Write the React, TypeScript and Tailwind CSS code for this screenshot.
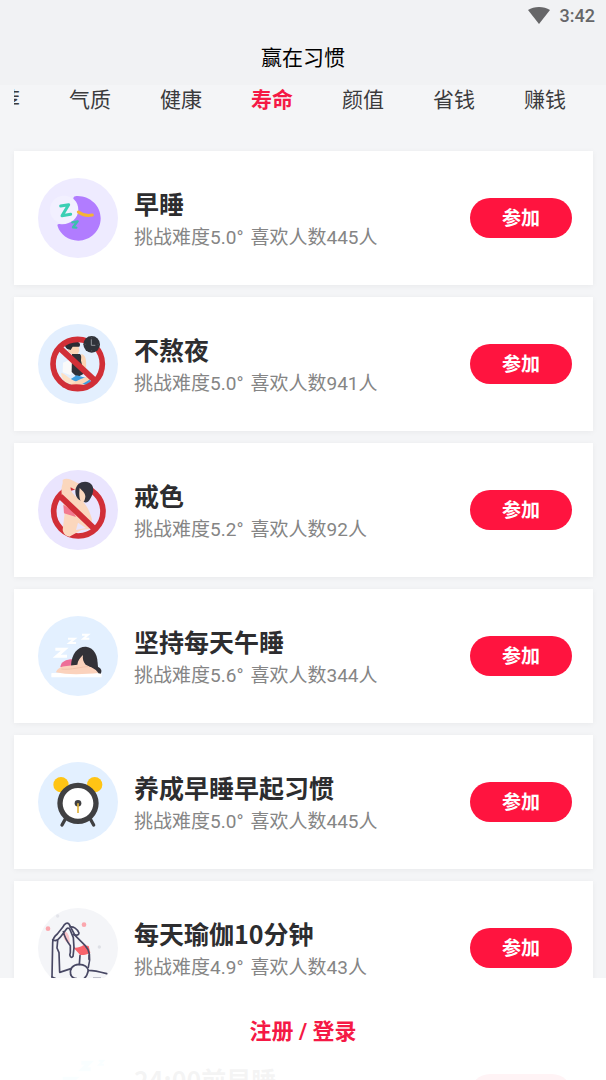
import type { ReactNode } from "react";

const tabs = ["推荐", "气质", "健康", "寿命", "颜值", "省钱", "赚钱"];

function MoonIcon() {
  return (
    <svg viewBox="30 27 240 240" className="size-20 shrink-0" aria-hidden="true">
      <circle cx="150" cy="147" r="120" fill="#eeebff" />
      <circle cx="108" cy="122" r="42" fill="#f2f0ff" />
      <path d="M136 88c1-6 6-8 13-7 38 1 69 29 69 67 0 37-30 67-67 67-30 0-55-19-62-43-2-6 1-8 6-7 31 4 55-15 56-42 0-13-4-24-12-31-2-2-3-2-3-4Z" fill="#b17cff" />
      <path d="M151 129c13 10 26 12 42 9" fill="none" stroke="#f5b335" strokeWidth="9" strokeLinecap="round" />
      <path d="M98 111l24-4-20 33 26-4" fill="none" stroke="#3bcfb4" strokeWidth="9" strokeLinecap="round" strokeLinejoin="round" />
      <path d="M133 160l16-3-14 18 10 1" fill="none" stroke="#3bbfae" strokeWidth="7" strokeLinecap="round" strokeLinejoin="round" />
    </svg>
  );
}

function NoLateNightIcon() {
  return (
    <svg viewBox="32 28 240 240" className="size-20 shrink-0" aria-hidden="true">
      <circle cx="152" cy="148" r="120" fill="#e3effe" />
      <path d="M107 144l20-9 23 28-22 18-22-8Z" fill="#fafafa" />
      <path d="M122 90l30-2 4 20-6 14-14-1-14-12Z" fill="#fbd5b5" />
      <path d="M112 88c0-9 14-14 30-9 13 1 20 9 14 17l-20 0-6 10-10-3c-5-4-8-9-8-15Z" fill="#2b2c33" />
      <path d="M134 118l24 0 9 14 1 46-18 10-17-16Z" fill="#2f3138" />
      <path d="M162 118c12 2 16 16 14 42l-10-2-5-20Z" fill="#fbd5b5" />
      <path d="M120 200l28-18 36 10 12 14-30 10-46 2Z" fill="#3f9ee0" />
      <path d="M102 174c8 2 24 18 42 26l34 12-28 6-30-12c-12-8-19-20-18-32Z" fill="#fde0c4" />
      <path d="M192 184c-20 2-44 14-60 24l10 8c18-4 40-16 50-26Z" fill="#fbd5b5" />
      <path d="M104 217c24-12 66-10 88 0l-40 12Z" fill="#d12f37" />
      <circle cx="151" cy="148" r="74" fill="none" stroke="#d12f37" strokeWidth="17" />
      <path d="M97 100l106 98" stroke="#d12f37" strokeWidth="18" />
      <circle cx="193" cy="89" r="25" fill="#30333a" />
      <path d="M192 74v18h12" fill="none" stroke="#8f9298" strokeWidth="3" />
      <path d="M193 68v3M193 107v3M172 89h3M211 89h3" stroke="#6b6e74" strokeWidth="2" />
    </svg>
  );
}

function NoLustIcon() {
  return (
    <svg viewBox="30 30 240 240" className="size-20 shrink-0" aria-hidden="true">
      <circle cx="150" cy="150" r="120" fill="#eae5fe" />
      <circle cx="151" cy="154" r="74" fill="none" stroke="#d12f37" strokeWidth="17" />
      <path d="M104 60c10-8 26-2 46 10l6 14-8 10-20-12c-2 8 6 20 18 30 20 8 36 30 46 66l-6 28-26 4-36 20c-12-2-18-10-20-20l6-50-4-36c-6-20-8-38-2-54Z" fill="#fbd7bd" />
      <path d="M106 134l28 18 10 19-36-11Z" fill="#f2798f" />
      <path d="M150 188l-6 22 30-6Z" fill="#e9e5fb" />
      <path d="M97 109l104 99" stroke="#d12f37" strokeWidth="18" />
      <path d="M142 92c2-22 24-32 42-24 16 8 14 30 4 46-6 12-14 16-20 12l-8-4c-12-4-18-14-18-30Z" fill="#34343e" />
      <path d="M155 84c8 8 16 14 17 24 0 8-3 18-9 20-8-4-11-20-8-44Z" fill="#fbd7bd" />
    </svg>
  );
}

function NapIcon() {
  return (
    <svg viewBox="30 31 240 240" className="size-20 shrink-0" aria-hidden="true">
      <circle cx="150" cy="151" r="120" fill="#e3f0ff" />
      <g fill="none" stroke="#fff">
        <path d="M82 131h28l-24 21h31" strokeWidth="9" />
        <path d="M120 99h20l-16 13h20" strokeWidth="6" />
        <path d="M162 87h18l-14 12h18" strokeWidth="6" />
      </g>
      <rect x="70" y="202" width="151" height="13" rx="2" fill="#fff" />
      <path d="M97 184c2-16 18-24 42-23l13 25Z" fill="#ed6f98" />
      <path d="M129 180c2-36 20-58 45-57 25 3 38 28 34 60 12 4 15 12 10 21-20-6-66-4-89-24Z" fill="#333238" />
      <path d="M165 148c-8 7-16 17-17 29l-38 5c-15 2-23 9-26 18 30 8 90 6 127 2-8-14-25-19-38-25-7-8-10-17-8-29Z" fill="#fbd2bc" />
      <path d="M100 190c28 4 64-8 82-7" fill="none" stroke="#edb9a1" strokeWidth="2" />
      <path d="M166 147c2 17 8 30 21 36l24 5-5-26-20-24Z" fill="#333238" />
    </svg>
  );
}

function AlarmIcon() {
  return (
    <svg viewBox="32 33 240 240" className="size-20 shrink-0" aria-hidden="true">
      <circle cx="152" cy="153" r="120" fill="#e3f0ff" />
      <circle cx="101" cy="101" r="23" fill="#ffc414" />
      <circle cx="202" cy="101" r="23" fill="#ffc414" />
      <path d="M114 204l-10 18M189 204l10 18" stroke="#404042" strokeWidth="10" strokeLinecap="round" />
      <circle cx="152" cy="157" r="54" fill="#fff" stroke="#404042" strokeWidth="16" />
      <circle cx="152" cy="157" r="10" fill="#404042" />
      <path d="M152 157v29" stroke="#e3b43b" strokeWidth="5" />
    </svg>
  );
}

function YogaIcon() {
  return (
    <svg viewBox="32 37 240 240" className="size-20 shrink-0" aria-hidden="true">
      <circle cx="152" cy="157" r="120" fill="#f4f5f8" />
      <circle cx="62" cy="99" r="7" fill="#fba7ae" />
      <circle cx="170" cy="87" r="7" fill="#fba7ae" />
      <circle cx="91" cy="61" r="5" fill="#e3e4ea" />
      <circle cx="216" cy="154" r="5" fill="#dee0e6" />
      <path d="M108 108c12-2 20 12 19 36-15-6-21-18-19-36Z" fill="#fbc5c9" />
      <path d="M137 155c10 3 20 0 32-7l15 3 5 20c-10 6-20 8-31 7-6-8-13-14-21-23Z" fill="#f8646c" />
      <g fill="none" stroke="#484864" strokeWidth="5" strokeLinecap="round" strokeLinejoin="round">
        <path d="M74 244l2-103c0-10 6-20 14-26l16-20c6-12 13-16 19-10l18 34 30 30c16 16 18 36 10 66" />
        <path d="M76 132c8 6 17 0 24-9l18-24c4-3 8-1 10 3l10 24 2 30-3 26c-6 8-12-2-8-12v-20c-8-10-16-20-21-42" />
        <path d="M128 94c10-2 22 5 27 18 0 8-10 7-17 5" />
        <path d="M91 135l-2 22 6 14 2 59 34-11" />
        <path d="M158 180l-2 26M185 178v13" />
        <path d="M130 237c-4-18 6-30 25-31 16 1 26 8 28 18 18 0 37 5 55 10" />
        <path d="M130 237c3 7 9 12 18 12M74 244l12 5M183 224c-2 11-6 19-13 25" />
      </g>
      <path d="M76 250h112M197 247h24" stroke="#8b8b9f" strokeWidth="3" />
    </svg>
  );
}

function ZzzIcon() {
  return (
    <svg viewBox="30 30 240 240" className="size-20 shrink-0" aria-hidden="true">
      <circle cx="150" cy="150" r="120" fill="#fafcff" />
      <g fill="none" stroke="#8fdcf5">
        <path d="M104 104h36l-32 30h36" strokeWidth="12" />
        <path d="M160 56h24l-20 20h24" strokeWidth="12" />
        <path d="M212 50h14l-12 12h14" strokeWidth="6" />
      </g>
    </svg>
  );
}

type Habit = {
  name: string;
  level: string;
  likes: number;
  icon: ReactNode;
};

const habits: Habit[] = [
  { name: "早睡", level: "5.0", likes: 445, icon: <MoonIcon /> },
  { name: "不熬夜", level: "5.0", likes: 941, icon: <NoLateNightIcon /> },
  { name: "戒色", level: "5.2", likes: 92, icon: <NoLustIcon /> },
  { name: "坚持每天午睡", level: "5.6", likes: 344, icon: <NapIcon /> },
  { name: "养成早睡早起习惯", level: "5.0", likes: 445, icon: <AlarmIcon /> },
  { name: "每天瑜伽10分钟", level: "4.9", likes: 43, icon: <YogaIcon /> },
  { name: "24:00前早睡", level: "5.0", likes: 120, icon: <ZzzIcon /> },
];

function HabitCard({ habit }: { habit: Habit }) {
  return (
    <li className="flex h-[134px] shrink-0 items-center gap-4 bg-white pl-6 pr-[21px] shadow-[0_1px_6px_rgba(0,0,0,0.05)]">
      {habit.icon}
      <div className="min-w-0 flex-1">
        <h2 className="font-['Noto_Sans_CJK_SC',sans-serif] text-[25px] leading-[39px] font-bold whitespace-nowrap text-[#2d2d2f]">
          {habit.name}
        </h2>
        <p className="flex gap-[7px] text-[19px] leading-[29px] whitespace-nowrap text-[#858585]">
          <span>挑战难度{habit.level}°</span>
          <span>喜欢人数{habit.likes}人</span>
        </p>
      </div>
      <button type="button" className="h-10 w-[102px] shrink-0 rounded-full bg-[#ff143f] pt-0.5 text-[19px] font-bold text-white">
        参加
      </button>
    </li>
  );
}

export default function App() {
  return (
    <div className="relative flex h-screen flex-col overflow-hidden bg-[#f4f5f7] font-[Roboto,'Noto_Sans_CJK_SC',sans-serif]">
      <header className="bg-[#f1f2f4]">
        {/* Status bar */}
        <div className="flex h-8 items-center justify-end gap-[10px] pr-[11px] text-[#666668]">
          <svg viewBox="0 0 22 18" className="h-[18px] w-[22px]" aria-hidden="true">
            <path d="M0 3C6-1 16-1 22 3L11 17Z" fill="currentColor" />
          </svg>
          <span className="text-lg font-medium">3:42</span>
        </div>
        <h1 className="h-[53px] text-center text-[21px] leading-[52px] text-black">赢在习惯</h1>
      </header>

      <nav className="mx-[14px] shrink-0 overflow-hidden">
        <ul className="flex justify-end gap-[49px] pr-[26px]">
          {tabs.map((tab) => (
            <li key={tab} className="shrink-0">
              <button
                type="button"
                className={
                  tab === "寿命"
                    ? "block text-[21px] leading-[30px] font-bold text-[#f51945]"
                    : "block text-[21px] leading-[30px] text-[#3b3b3d]"
                }
              >
                {tab}
              </button>
            </li>
          ))}
        </ul>
      </nav>

      <main className="min-h-0 flex-1 overflow-y-auto pt-9 [scrollbar-width:none]">
        <ul className="flex flex-col gap-3 pr-[13px] pb-28 pl-[14px]">
          {habits.map((habit) => (
            <HabitCard key={habit.name} habit={habit} />
          ))}
        </ul>
      </main>

      {/* Sign-in bar stays over the list */}
      <footer className="absolute inset-x-0 bottom-0 flex h-[102px] items-center justify-center bg-white/95 pt-1">
        <a href="#login" className="text-[22px] font-bold text-[#f51945]">
          注册 / 登录
        </a>
      </footer>
    </div>
  );
}
